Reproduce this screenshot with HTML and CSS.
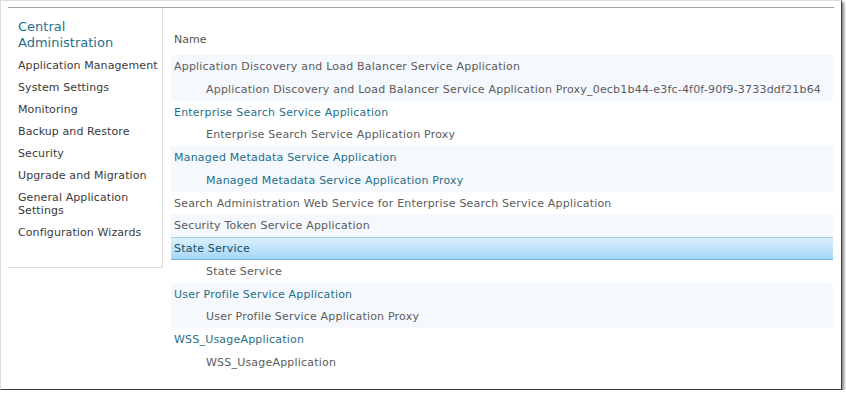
FILE: index.html
```html
<!DOCTYPE html>
<html lang="en">

<head>
    <meta charset="UTF-8">
    <title>Service Applications</title>
    <link rel="stylesheet" href="styles.css">
</head>

<body>

    <div class="frame">
        <div class="page">
            <div class="quick-launch">
                <div class="ql-header">Central Administration</div>
                <ul class="ql-items">
                    <li>Application Management</li>
                    <li>System Settings</li>
                    <li>Monitoring</li>
                    <li>Backup and Restore</li>
                    <li>Security</li>
                    <li>Upgrade and Migration</li>
                    <li>General Application Settings</li>
                    <li>Configuration Wizards</li>
                </ul>
            </div>

            <div class="main">
                <div class="col-header">Name</div>
                <div class="rows">
                    <div class="row alt">Application Discovery and Load Balancer Service Application</div>
                    <div class="row alt child">Application Discovery and Load Balancer Service Application Proxy_0ecb1b44-e3fc-4f0f-90f9-3733ddf21b64</div>
                    <div class="row link">Enterprise Search Service Application</div>
                    <div class="row child">Enterprise Search Service Application Proxy</div>
                    <div class="row alt link">Managed Metadata Service Application</div>
                    <div class="row alt child link">Managed Metadata Service Application Proxy</div>
                    <div class="row">Search Administration Web Service for Enterprise Search Service Application</div>
                    <div class="row alt">Security Token Service Application</div>
                    <div class="row selected">State Service</div>
                    <div class="row child">State Service</div>
                    <div class="row alt link">User Profile Service Application</div>
                    <div class="row alt child">User Profile Service Application Proxy</div>
                    <div class="row link">WSS_UsageApplication</div>
                    <div class="row child">WSS_UsageApplication</div>
                </div>
            </div>
        </div>
    </div>

</body>

</html>
```

FILE: styles.css
```css
body {
    margin: 0;
    background: #fff;
    font-family: "DejaVu Sans", Verdana, sans-serif;
    font-size: 11px;
    color: #333;
}

.frame {
    box-sizing: border-box;
    width: 842px;
    height: 390px;
    padding-top: 6px;
    padding-left: 7px;
    background: #fff;
    border-top: 1px solid #dcdcdc;
    border-left: 1px solid #dcdcdc;
    border-right: 1px solid #3a3a3a;
    border-bottom: 1px solid #3a3a3a;
    box-shadow: 2px 2px 3px rgba(0, 0, 0, 0.5);
}

.page {
    display: flex;
    align-items: flex-start;
    width: 826px;
    border-top: 1px solid #a3a3a3;
}

/* left navigation */
.quick-launch {
    box-sizing: border-box;
    width: 155px;
    height: 260px;
    padding: 11px 0 0 10px;
    border-right: 1px solid #dedede;
    border-bottom: 1px solid #dedede;
}

.ql-header {
    font-size: 13px;
    line-height: 16px;
    color: #1f7189;
    width: 120px;
}

.ql-items {
    list-style: none;
    margin: 4px 0 0;
    padding: 0;
    width: 144px;
    letter-spacing: 0.1px;
}

.ql-items li {
    padding: 4px 0 5px;
    line-height: 13px;
    color: #3a3a3a;
}

/* service application list */
.main {
    width: 662px;
    margin-left: 8px;
    padding-top: 24px;
}

.col-header {
    padding-left: 3px;
    line-height: 16px;
    color: #555;
    margin-bottom: 7px;
}

.row {
    box-sizing: border-box;
    height: 22.75px;
    line-height: 22.75px;
    padding-top: 1px;
    padding-left: 3px;
    color: #5c5c5c;
    letter-spacing: 0.2px;
    white-space: nowrap;
}

.row.alt {
    background: #f5f8fc;
}

.row.child {
    padding-left: 35px;
}

.row.link {
    color: #1f6f88;
}

.row.selected {
    line-height: 20px;
    color: #174f68;
    border-top: 1px solid #a9cbe0;
    border-bottom: 1px solid #74aed6;
    background: linear-gradient(#dcf0fc, #a5d6f8);
}
```
